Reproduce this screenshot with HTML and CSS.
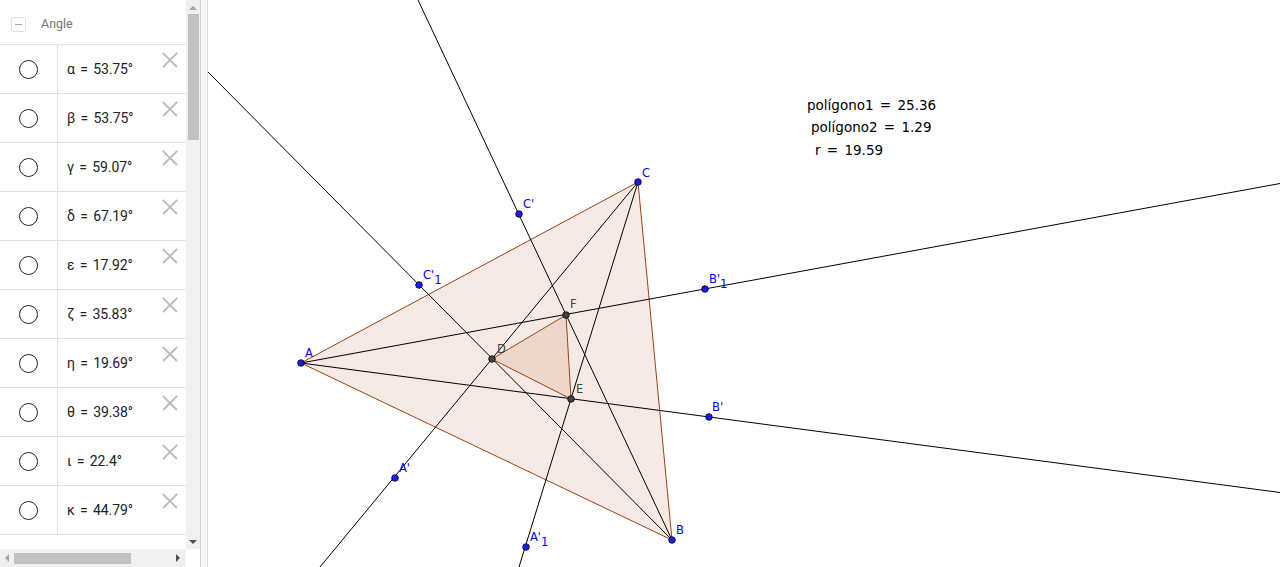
FILE: index.html
```html
<!DOCTYPE html>
<html>
<head>
<meta charset="utf-8">
<link rel="stylesheet" href="styles.css">
</head>
<body>
<div class="app">
  <aside class="algebra">
    <div class="algebra-list">
      <div class="group-head">
        <span class="collapse-box"><span class="collapse-minus"></span></span>
        <span class="group-title">Angle</span>
      </div>
      <div class="item"><div class="marble-col"><span class="marble"></span></div><div class="item-text">α = 53.75°</div><span class="del"></span></div>
      <div class="item"><div class="marble-col"><span class="marble"></span></div><div class="item-text">β = 53.75°</div><span class="del"></span></div>
      <div class="item"><div class="marble-col"><span class="marble"></span></div><div class="item-text">γ = 59.07°</div><span class="del"></span></div>
      <div class="item"><div class="marble-col"><span class="marble"></span></div><div class="item-text">δ = 67.19°</div><span class="del"></span></div>
      <div class="item"><div class="marble-col"><span class="marble"></span></div><div class="item-text">ε = 17.92°</div><span class="del"></span></div>
      <div class="item"><div class="marble-col"><span class="marble"></span></div><div class="item-text">ζ = 35.83°</div><span class="del"></span></div>
      <div class="item"><div class="marble-col"><span class="marble"></span></div><div class="item-text">η = 19.69°</div><span class="del"></span></div>
      <div class="item"><div class="marble-col"><span class="marble"></span></div><div class="item-text">θ = 39.38°</div><span class="del"></span></div>
      <div class="item"><div class="marble-col"><span class="marble"></span></div><div class="item-text">ι = 22.4°</div><span class="del"></span></div>
      <div class="item"><div class="marble-col"><span class="marble"></span></div><div class="item-text">κ = 44.79°</div><span class="del"></span></div>
    </div>
    <div class="vscroll">
      <span class="arrow-up"></span>
      <span class="vthumb"></span>
      <span class="vspace"></span>
      <span class="arrow-down"></span>
    </div>
    <div class="hscroll">
      <span class="arrow-left"></span>
      <span class="hthumb"></span>
      <span class="hspace"></span>
      <span class="arrow-right"></span>
    </div>
    <div class="corner"></div>
  </aside>
  <div class="divider"></div>
  <main class="canvas">
    <svg class="graphics" viewBox="208 0 1072 567" width="1072" height="567" xmlns="http://www.w3.org/2000/svg">
      <polygon points="301,363 672,540 638,182" fill="#993300" fill-opacity="0.1" stroke="#a0410d" stroke-width="1"/>
      <polygon points="492,359 571,399 566,315" fill="#993300" fill-opacity="0.1" stroke="#a0410d" stroke-width="1"/>
      <g stroke="#000" stroke-width="1" fill="none">
        <line x1="208" y1="72" x2="672" y2="540"/>
        <line x1="418" y1="0" x2="672" y2="540"/>
        <line x1="301" y1="363" x2="1280" y2="183.5"/>
        <line x1="301" y1="363" x2="1280" y2="492.5"/>
        <line x1="638" y1="182" x2="320" y2="567"/>
        <line x1="638" y1="182" x2="519" y2="567"/>
      </g>
      <g stroke="#000" stroke-width="0.8">
        <circle cx="301" cy="363" r="3.3" fill="#1a1aff"/>
        <circle cx="672" cy="540" r="3.3" fill="#1a1aff"/>
        <circle cx="638" cy="182" r="3.3" fill="#1a1aff"/>
        <circle cx="519" cy="214" r="3.3" fill="#1a1aff"/>
        <circle cx="419" cy="285" r="3.3" fill="#1a1aff"/>
        <circle cx="705" cy="289" r="3.3" fill="#1a1aff"/>
        <circle cx="709" cy="417" r="3.3" fill="#1a1aff"/>
        <circle cx="395" cy="478" r="3.3" fill="#1a1aff"/>
        <circle cx="526" cy="547" r="3.3" fill="#1a1aff"/>
        <circle cx="492" cy="359" r="3.3" fill="#444"/>
        <circle cx="571" cy="399" r="3.3" fill="#444"/>
        <circle cx="566" cy="315" r="3.3" fill="#444"/>
      </g>
      <g class="lbl-blue">
        <text x="305" y="357">A</text>
        <text x="676" y="534">B</text>
        <text x="642" y="177">C</text>
        <text x="523" y="208">C'</text>
        <text x="423" y="279">C'<tspan class="sub" dx="0" dy="5">1</tspan></text>
        <text x="709" y="283">B'<tspan class="sub" dx="0" dy="5">1</tspan></text>
        <text x="712" y="411">B'</text>
        <text x="399" y="472">A'</text>
        <text x="530" y="541">A'<tspan class="sub" dx="0" dy="5">1</tspan></text>
      </g>
      <g class="lbl-gray">
        <text x="497" y="353">D</text>
        <text x="576" y="393">E</text>
        <text x="570" y="308">F</text>
      </g>
      <g class="values">
        <text x="807" y="110">polígono1 = 25.36</text>
        <text x="811" y="132">polígono2 = 1.29</text>
        <text x="815" y="155">r = 19.59</text>
      </g>
    </svg>
  </main>
</div>
</body>
</html>
```

FILE: styles.css
```css
html, body {
  margin: 0;
  padding: 0;
  background: #fff;
  overflow: hidden;
}
.app {
  display: flex;
  width: 1280px;
  height: 567px;
}
.algebra {
  width: 200px;
  flex: none;
  display: grid;
  grid-template-columns: 186px 14px;
  grid-template-rows: 549px 18px;
  background: #fff;
}
.algebra-list {
  overflow: hidden;
  font-family: Roboto, "Liberation Sans", sans-serif;
}
.group-head {
  height: 45px;
  box-sizing: border-box;
  display: flex;
  align-items: center;
  padding-left: 11px;
  padding-top: 3px;
  border-bottom: 1px solid #e6e6e6;
  gap: 15px;
}
.collapse-box {
  width: 13px;
  height: 13px;
  border: 1px solid #e0e0e0;
  border-radius: 2px;
  display: flex;
  align-items: center;
  justify-content: center;
  margin-top: 1px;
}
.collapse-minus {
  width: 7px;
  height: 1px;
  background: #aaa;
}
.group-title {
  font-size: 12.5px;
  color: #777;
}
.item {
  height: 49px;
  box-sizing: border-box;
  display: flex;
  border-bottom: 1px solid #e0e0e0;
  position: relative;
}
.marble-col {
  width: 57px;
  flex: none;
  border-right: 1px solid #e0e0e0;
  display: flex;
  align-items: center;
  justify-content: center;
}
.marble {
  width: 17px;
  height: 17px;
  border: 1.3px solid #222;
  border-radius: 50%;
  margin-right: 1px;
}
.item-text {
  padding-left: 9px;
  display: flex;
  align-items: center;
  font-size: 14px;
  color: #222;
  letter-spacing: -0.1px;
  word-spacing: 2px;
}
.del {
  position: absolute;
  right: 8px;
  top: 7px;
  width: 16px;
  height: 16px;
}
.del::before, .del::after {
  content: "";
  position: absolute;
  left: -2px;
  top: 7px;
  width: 20px;
  height: 1.5px;
  background: #bdbdbd;
  transform: rotate(45deg);
}
.del::after {
  transform: rotate(-45deg);
}
.vscroll {
  background: #f0f0f0;
  display: flex;
  flex-direction: column;
  align-items: center;
}
.arrow-up {
  margin-top: 6px;
  width: 0;
  height: 0;
  border-left: 4px solid transparent;
  border-right: 4px solid transparent;
  border-bottom: 4px solid #a3a3a3;
}
.vthumb {
  margin-top: 4px;
  width: 11px;
  height: 126px;
  background: #c1c1c1;
}
.vspace { flex: 1; }
.arrow-down {
  margin-bottom: 5px;
  width: 0;
  height: 0;
  border-left: 4px solid transparent;
  border-right: 4px solid transparent;
  border-top: 4px solid #505050;
}
.hscroll {
  background: #f0f0f0;
  display: flex;
  align-items: center;
  padding: 0 6px 0 5px;
}
.arrow-left {
  width: 0;
  height: 0;
  border-top: 4px solid transparent;
  border-bottom: 4px solid transparent;
  border-right: 4px solid #a3a3a3;
}
.hthumb {
  margin-left: 5px;
  width: 117px;
  height: 11px;
  background: #c1c1c1;
}
.hspace { flex: 1; }
.arrow-right {
  width: 0;
  height: 0;
  border-top: 4px solid transparent;
  border-bottom: 4px solid transparent;
  border-left: 4px solid #505050;
}
.corner {
  background: #fff;
}
.divider {
  width: 6px;
  flex: none;
  background: #f7f7f7;
  border-left: 1px solid #d5d5d5;
  border-right: 1px solid #dcdcdc;
}
.canvas {
  flex: 1;
  overflow: hidden;
}
.graphics {
  display: block;
}
.lbl-blue text {
  font-family: "DejaVu Sans", sans-serif;
  font-size: 11.5px;
  fill: #0000ff;
}
.lbl-gray text {
  font-family: "DejaVu Sans", sans-serif;
  font-size: 11.5px;
  fill: #444;
}
.values text {
  font-family: "DejaVu Sans", sans-serif;
  font-size: 13.5px;
  fill: #000;
  word-spacing: 2px;
}
```
